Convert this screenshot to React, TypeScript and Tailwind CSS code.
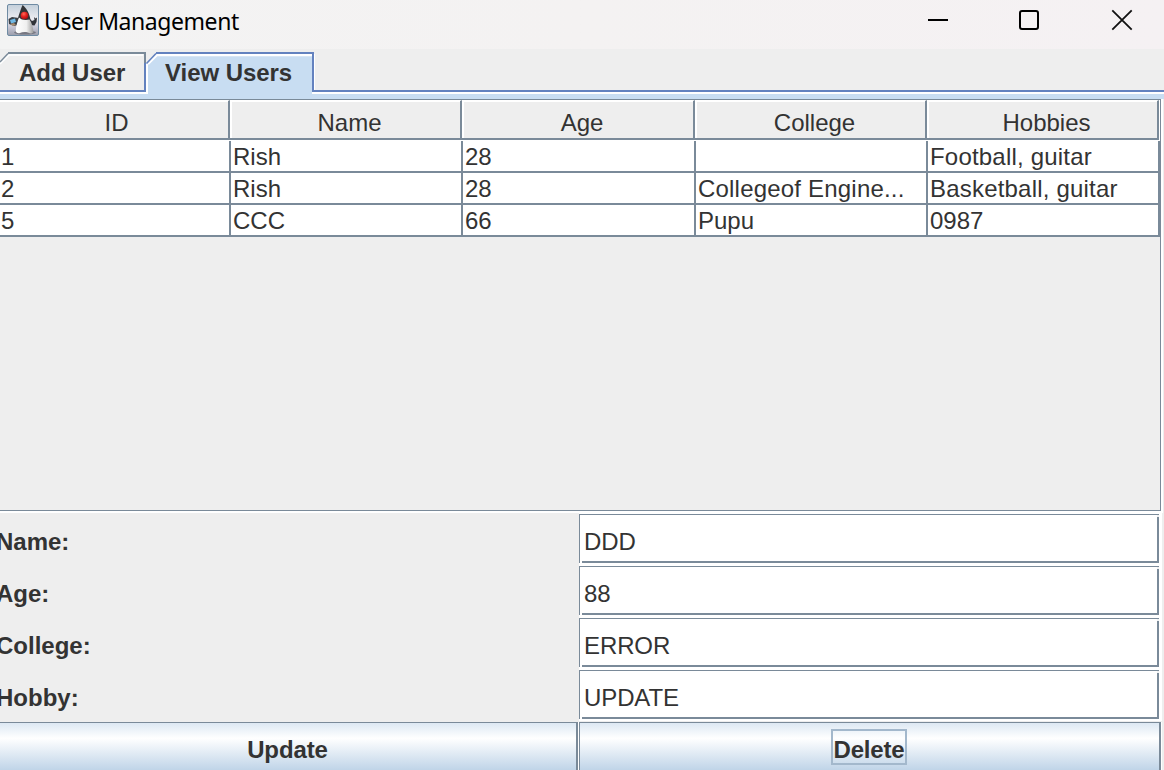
import type { ReactNode } from "react";

const columns = ["ID", "Name", "Age", "College", "Hobbies"];

const rows = [
  ["1", "Rish", "28", "", "Football, guitar"],
  ["2", "Rish", "28", "Collegeof Engine...", "Basketball, guitar"],
  ["5", "CCC", "66", "Pupu", "0987"],
];

const fields = [
  { label: "Name:", value: "DDD" },
  { label: "Age:", value: "88" },
  { label: "College:", value: "ERROR" },
  { label: "Hobby:", value: "UPDATE" },
];

function DukeIcon() {
  return (
    <svg width="32" height="32" viewBox="0 0 32 32" aria-hidden="true">
      <defs>
        <linearGradient id="tile" x1="0" y1="0" x2="0" y2="1">
          <stop offset="0" stopColor="#c3cfda" />
          <stop offset="0.45" stopColor="#ececf1" />
          <stop offset="0.75" stopColor="#c3c3d2" />
          <stop offset="1" stopColor="#9a9dab" />
        </linearGradient>
        <linearGradient id="body" x1="0" y1="0" x2="1" y2="0">
          <stop offset="0" stopColor="#ffffff" />
          <stop offset="0.6" stopColor="#efefef" />
          <stop offset="1" stopColor="#9c9c9c" />
        </linearGradient>
        <radialGradient id="nose" cx="0.4" cy="0.3" r="0.7">
          <stop offset="0" stopColor="#ff6a58" />
          <stop offset="0.5" stopColor="#e52420" />
          <stop offset="1" stopColor="#a80d12" />
        </radialGradient>
      </defs>
      <rect x="0.5" y="0.5" width="31" height="31" rx="1.5" fill="url(#tile)" stroke="#6f8ba3" />
      <ellipse cx="18" cy="28.5" rx="11" ry="2" fill="#62626b" opacity="0.7" />
      <path d="M1.500 15 L5 13 L12 14 L11 21 L7 22 L2 20 Z" fill="#3b4148" />
      <path d="M3 16 L8 14.5 L9 18 L4 19.5 Z" fill="#71b9e6" />
      <path d="M3 20 L7 19 L9 21 L6 22 Z" fill="#a88d72" />
      <path d="M22 14 L25 17 L27.500 16 L27 13 L28.500 14.500 L30 13.500 L29.500 18 L27.500 21.500 L23 21 Z" fill="#303238" />
      <path d="M15.500 1 C19 3.500 22.500 9 23.500 16 L21 19 L12 17 L11 14 C12 10 13.500 6 15.500 1 Z" fill="#333437" />
      <path d="M12 13.500 C14 16 19 16.500 22.500 15.500 C25 19 26 24 26.500 28 C26 30 23 29.500 21 28.500 C18 27.800 15 28 13 29 C11 29.800 8.800 29 8.800 26.500 C9 22 10.500 17 12 13.500 Z" fill="url(#body)" />
      <circle cx="17.500" cy="11.500" r="3.800" fill="url(#nose)" />
    </svg>
  );
}

function TitleBar() {
  return (
    <header className="flex h-[49px] shrink-0 items-start bg-linear-to-r from-[#f3f3f3] via-[#f4f2f2] to-[#f5f1f3]">
      <div className="pt-1 pl-[7px]">
        <DukeIcon />
      </div>
      <h1 className="pt-1 pl-[5px] font-['Noto_Sans',sans-serif] text-[23px] leading-[34px] tracking-[-0.43px] whitespace-nowrap text-black">
        User Management
      </h1>
      <div className="ml-auto flex pt-[9px] pr-[31px]">
        <button aria-label="Minimize" className="mr-[69px]">
          <svg width="22" height="22" viewBox="0 0 22 22">
            <path d="M1 11H21" stroke="#000" strokeWidth="2" />
          </svg>
        </button>
        <button aria-label="Maximize" className="mr-[71px]">
          <svg width="22" height="22" viewBox="0 0 22 22">
            <rect x="2" y="2" width="18" height="18" rx="2" fill="none" stroke="#000" strokeWidth="2" />
          </svg>
        </button>
        <button aria-label="Close">
          <svg width="22" height="22" viewBox="0 0 22 22">
            <path d="M1.300 1.300L20.700 20.700M20.700 1.300L1.300 20.700" stroke="#111" strokeWidth="1.800" />
          </svg>
        </button>
      </div>
    </header>
  );
}

function TabStrip() {
  return (
    <nav className="relative h-[50px] shrink-0 font-bold">
      <svg className="absolute inset-0" width="1164" height="50" viewBox="0 0 1164 50" aria-hidden="true">
        <path d="M0 41h1164v2H0z" fill="#6382bf" />
        <path d="M0 43h1164v2H0z" fill="#fff" />
        <path d="M0 45h1164v5H0z" fill="#c8ddf2" />
        <path d="M0 13.500L8 5.500H144V41H0z" fill="#eee" />
        <path d="M0 15L9 6H143" stroke="#fff" strokeWidth="1.500" fill="none" />
        <path d="M0 13L8 4.500" stroke="#7a8a99" strokeWidth="1.400" fill="none" />
        <path d="M8 3H146V5H8z" fill="#7a8a99" />
        <path d="M144 3h2v11h-2z" fill="#7a8a99" />
        <path d="M144 14h2v27h-2z" fill="#6382bf" />
        <path d="M146 15h2v30h-2z" fill="#fff" />
        <path d="M148 15L157 5H312V46H148z" fill="#c8ddf2" />
        <path d="M148 15L157 6H312" stroke="#fff" strokeWidth="2.400" fill="none" />
        <path d="M146.500 14.500L156 4.500" stroke="#6382bf" strokeWidth="1.600" fill="none" />
        <path d="M156 3H314V43H312V5H156z" fill="#6382bf" />
        <path d="M314 5h1v36h-1z" fill="#fff" />
      </svg>
      <div className="relative flex text-[24px] leading-[28px] tracking-[-0.05px]">
        <button className="w-[146px] pt-[10px] pl-[19px] text-left whitespace-nowrap">Add User</button>
        <button className="w-[168px] pt-[10px] pl-[19px] text-left whitespace-nowrap">View Users</button>
      </div>
    </nav>
  );
}

function UserTable() {
  return (
    <section className="flex h-[414px] w-[1163px] shrink-0 flex-col border-r-2 border-b-2 border-white">
      <div className="flex h-[412px] flex-col border-t border-r border-b border-[#7a8a99]">
        <div className="grid h-[41px] shrink-0 grid-cols-[230px_232px_233px_232px_232px] bg-white">
          {columns.map((c, i) => (
            <div
              key={c}
              className={`flex h-[40px] justify-center border-t border-r-2 border-b-2 border-t-white border-r-[#7a8a99] border-b-[#7a8a99] bg-[#eee] pt-[8px] leading-[28px] ${i > 0 ? "pl-[9px] shadow-[inset_2px_1px_0_#fff]" : "pl-[5px] shadow-[inset_0_1px_0_#fff]"}`}
            >
              {c}
            </div>
          ))}
        </div>
        {rows.map((row) => (
          <div key={row[0]} className="grid h-8 shrink-0 grid-cols-[231px_232px_233px_232px_232px] bg-white">
            {row.map((cell, i) => (
              <div
                key={i}
                className={`border-r-2 border-b-2 border-[#7a8a99] pt-0.5 pl-0.5 leading-[28px] whitespace-nowrap first:pl-px ${cell.length > 6 ? "tracking-[0.2px]" : ""}`}
              >
                {cell}
              </div>
            ))}
          </div>
        ))}
      </div>
    </section>
  );
}

function Field({ value }: { value: string }) {
  return (
    <div className="h-[52px] bg-white pt-px">
      <div className="grid h-[49px] w-[580px] grid-cols-[1px_2px_1fr_2px] grid-rows-[1px_2px_1fr_2px]">
        <i className="col-span-4 bg-[#7a8a99]" />
        <i className="row-span-3 bg-[#7a8a99]" />
        <i className="col-start-4 row-start-2 bg-[#f0f1f2]" />
        <i className="col-start-3 col-end-5 row-start-4 bg-[#7a8a99]" />
        <i className="col-start-4 row-start-3 bg-[#7a8a99]" />
        <input
          defaultValue={value}
          className="col-start-3 row-start-3 min-w-0 bg-white pt-[6px] pl-[2px] tracking-[-0.1px] outline-none"
        />
      </div>
    </div>
  );
}

function ActionButton({ children, className }: { children: ReactNode; className: string }) {
  return (
    <button
      className={`flex h-[52px] justify-center border-t border-r-2 border-[#7a8a99] bg-linear-to-b from-[#dde8f3] from-0% via-white via-30% to-[#b8cfe5] to-100% pt-[6px] font-bold ${className}`}
    >
      {children}
    </button>
  );
}

export default function App() {
  return (
    <main className="flex h-[770px] w-[1164px] flex-col overflow-hidden bg-[#eee] font-['Liberation_Sans',Arial,sans-serif] text-[24px] leading-[28px] text-[#333]">
      <TitleBar />
      <TabStrip />
      <UserTable />
      <section className="shrink-0">
        {fields.map((f) => (
          <div key={f.label} className="grid grid-cols-[579px_583px]">
            <label className="-ml-[4px] pt-[15px] font-bold">{f.label}</label>
            <Field value={f.value} />
          </div>
        ))}
      </section>
      <footer className="mt-px grid w-[1162px] grid-cols-[578px_582px] gap-px bg-white">
        <ActionButton className="pr-px">
          <span className="pt-[7px] tracking-[-0.1px]">Update</span>
        </ActionButton>
        <ActionButton className="border-l pr-[2px]">
          <span className="h-9 w-[76px] border-2 border-[#a3b8cc] pt-[5px] pl-px text-center tracking-[-0.2px]">
            <span className="-mx-1 inline-block">Delete</span>
          </span>
        </ActionButton>
      </footer>
    </main>
  );
}
